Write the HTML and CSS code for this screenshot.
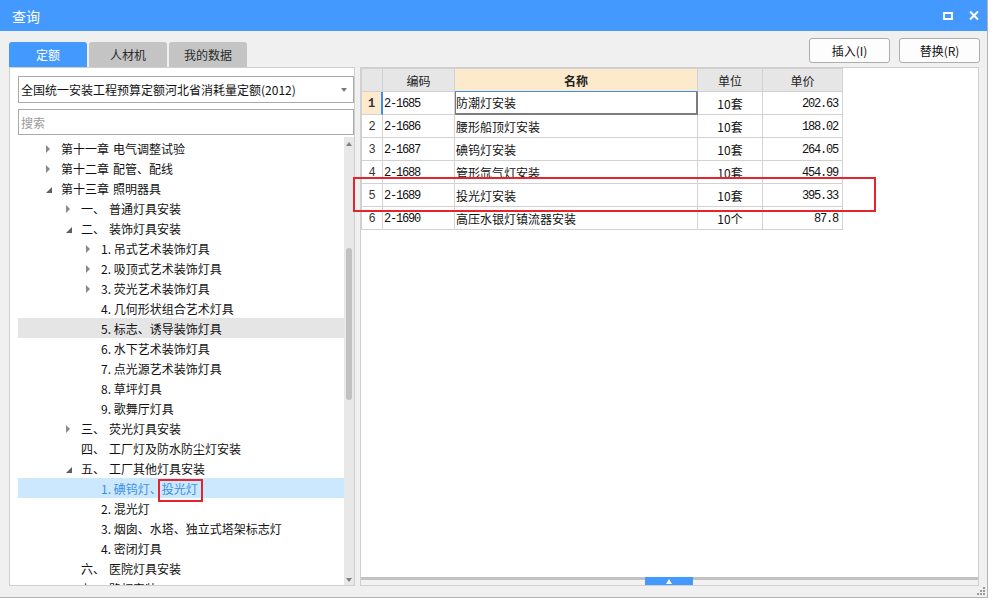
FILE: index.html
```html
<!DOCTYPE html>
<html lang="zh">
<head>
<meta charset="utf-8">
<title>查询</title>
<link rel="stylesheet" href="styles.css">
</head>
<body>
<div class="window">
  <div class="titlebar">
    <span class="title">查询</span>
    <div class="ctrls">
      <span class="maxbtn"></span>
      <svg class="closebtn" width="10" height="9" viewBox="0 0 10 9"><path d="M1 0.5 L9 8.5 M9 0.5 L1 8.5" stroke="#fff" stroke-width="2" fill="none"/></svg>
    </div>
  </div>
  <div class="main">
    <div class="leftcol">
      <div class="tabs">
        <div class="tab active">定额</div>
        <div class="tab">人材机</div>
        <div class="tab">我的数据</div>
      </div>
      <div class="panel lpanel">
        <div class="select"><span>全国统一安装工程预算定额河北省消耗量定额(2012)</span><span class="caret"></span></div>
        <div class="search">搜索</div>
        <div class="treewrap">
          <div class="tree">
            <div class="row l1"><span class="tw"><i class="ar"></i></span><span class="ch">第十一章</span>电气调整试验</div>
            <div class="row l1"><span class="tw"><i class="ar"></i></span><span class="ch">第十二章</span>配管、配线</div>
            <div class="row l1"><span class="tw"><i class="ad"></i></span><span class="ch">第十三章</span>照明器具</div>
            <div class="row l2"><span class="tw"><i class="ar"></i></span><span class="num">一、</span>普通灯具安装</div>
            <div class="row l2"><span class="tw"><i class="ad"></i></span><span class="num">二、</span>装饰灯具安装</div>
            <div class="row l3"><span class="tw"><i class="ar"></i></span>1. 吊式艺术装饰灯具</div>
            <div class="row l3"><span class="tw"><i class="ar"></i></span>2. 吸顶式艺术装饰灯具</div>
            <div class="row l3"><span class="tw"><i class="ar"></i></span>3. 荧光艺术装饰灯具</div>
            <div class="row l3"><span class="tw"></span>4. 几何形状组合艺术灯具</div>
            <div class="row l3 hover"><span class="tw"></span>5. 标志、诱导装饰灯具</div>
            <div class="row l3"><span class="tw"></span>6. 水下艺术装饰灯具</div>
            <div class="row l3"><span class="tw"></span>7. 点光源艺术装饰灯具</div>
            <div class="row l3"><span class="tw"></span>8. 草坪灯具</div>
            <div class="row l3"><span class="tw"></span>9. 歌舞厅灯具</div>
            <div class="row l2"><span class="tw"><i class="ar"></i></span><span class="num">三、</span>荧光灯具安装</div>
            <div class="row l2"><span class="tw"></span><span class="num">四、</span>工厂灯及防水防尘灯安装</div>
            <div class="row l2"><span class="tw"><i class="ad"></i></span><span class="num">五、</span>工厂其他灯具安装</div>
            <div class="row l3 selected"><span class="tw"></span>1. 碘钨灯、投光灯</div>
            <div class="row l3"><span class="tw"></span>2. 混光灯</div>
            <div class="row l3"><span class="tw"></span>3. 烟囱、水塔、独立式塔架标志灯</div>
            <div class="row l3"><span class="tw"></span>4. 密闭灯具</div>
            <div class="row l2"><span class="tw"></span><span class="num">六、</span>医院灯具安装</div>
            <div class="row l2"><span class="tw"></span><span class="num">七、</span>路灯安装</div>
          </div>
          <div class="vscroll">
            <i class="sup"></i>
            <div class="thumb"></div>
            <i class="sdown"></i>
          </div>
        </div>
      </div>
    </div>
    <div class="rightcol">
      <div class="btnrow">
        <button class="btn">插入(I)</button>
        <button class="btn">替换(R)</button>
      </div>
      <div class="panel rpanel">
        <div class="grid">
          <div class="c hd"></div>
          <div class="c hd">编码</div>
          <div class="c hd hdsel">名称</div>
          <div class="c hd">单位</div>
          <div class="c hd">单价</div>

          <div class="c rn rnsel">1</div>
          <div class="c code">2-1685</div>
          <div class="c name cellsel">防潮灯安装</div>
          <div class="c unit">10套</div>
          <div class="c price">202.63</div>

          <div class="c rn">2</div>
          <div class="c code">2-1686</div>
          <div class="c name">腰形船顶灯安装</div>
          <div class="c unit">10套</div>
          <div class="c price">188.02</div>

          <div class="c rn">3</div>
          <div class="c code">2-1687</div>
          <div class="c name">碘钨灯安装</div>
          <div class="c unit">10套</div>
          <div class="c price">264.05</div>

          <div class="c rn">4</div>
          <div class="c code">2-1688</div>
          <div class="c name">管形氙气灯安装</div>
          <div class="c unit">10套</div>
          <div class="c price">454.99</div>

          <div class="c rn">5</div>
          <div class="c code">2-1689</div>
          <div class="c name">投光灯安装</div>
          <div class="c unit">10套</div>
          <div class="c price">395.33</div>

          <div class="c rn">6</div>
          <div class="c code">2-1690</div>
          <div class="c name">高压水银灯镇流器安装</div>
          <div class="c unit">10个</div>
          <div class="c price">87.8</div>
        </div>
        <div class="splitter"><span class="handle"><i class="hup"></i></span></div>
      </div>
    </div>
  </div>
  <div class="mark mark-row"></div>
  <div class="mark mark-tree"></div>
  <svg class="grip" width="8" height="8" viewBox="0 0 8 8">
    <rect x="6" y="0" width="2" height="2" fill="#9a9a9a"/>
    <rect x="3" y="3" width="2" height="2" fill="#9a9a9a"/>
    <rect x="6" y="3" width="2" height="2" fill="#9a9a9a"/>
    <rect x="0" y="6" width="2" height="2" fill="#9a9a9a"/>
    <rect x="3" y="6" width="2" height="2" fill="#9a9a9a"/>
    <rect x="6" y="6" width="2" height="2" fill="#9a9a9a"/>
  </svg>
</div>
</body>
</html>
```

FILE: styles.css
```css
* { box-sizing: border-box; }
body {
  margin: 0;
  background: #ffffff;
  font-family: "Noto Sans CJK SC", "Microsoft YaHei", sans-serif;
  font-size: 12px;
  color: #111;
}
.window {
  position: relative;
  width: 988px;
  height: 598px;
  background: #f0f0f0;
  border-right: 1px solid #b4b4b4;
  border-bottom: 1px solid #b4b4b4;
}
.titlebar {
  height: 31px;
  background: #4499ff;
  display: flex;
  align-items: center;
  justify-content: space-between;
  padding: 0 8px 0 12px;
  color: #fff;
}
.title { font-size: 14px; line-height: 16px; }
.ctrls { display: flex; align-items: center; gap: 16px; }
.maxbtn {
  display: block;
  width: 10px;
  height: 8px;
  border: 2px solid #fff;
}
.closebtn { display: block; }

.main {
  display: flex;
  padding: 7px 0 0 9px;
  gap: 5px;
}
.leftcol { width: 346px; }
.tabs {
  display: flex;
  gap: 2px;
  margin-top: 4px;
  height: 25px;
}
.tab {
  width: 78px;
  height: 25px;
  background: #c4c4c4;
  color: #2a2a2a;
  border-radius: 3px 3px 0 0;
  display: flex;
  align-items: center;
  justify-content: center;
  line-height: 14px;
  padding-top: 1px;
}
.tab.active { background: #4499ff; color: #fff; }

.panel {
  background: #fff;
  border: 1px solid #cfcfcf;
  height: 519px;
}
.lpanel {
  padding: 8px 0 0 8px;
  display: flex;
  flex-direction: column;
}
.select {
  height: 27px;
  border: 1px solid #a9a9a9;
  display: flex;
  align-items: center;
  justify-content: space-between;
  padding: 1px 6px 0 2px;
  line-height: 14px;
  color: #111;
}
.caret {
  width: 0; height: 0;
  border-top: 4px solid #7a7a7a;
  border-left: 3px solid transparent;
  border-right: 3px solid transparent;
}
.search {
  margin-top: 6px;
  height: 26px;
  border: 1px solid #a9a9a9;
  color: #9a9a9a;
  padding: 1px 0 0 2px;
  display: flex;
  align-items: center;
  line-height: 14px;
}
.treewrap {
  flex: 1;
  display: flex;
  overflow: hidden;
  min-height: 0;
}
.tree {
  flex: 1;
  padding-top: 3px;
  overflow: hidden;
}
.row {
  height: 20px;
  display: flex;
  align-items: center;
  white-space: nowrap;
  line-height: 14px;
  padding-top: 1px;
  color: #111;
}
.row.l1 { padding-left: 28px; }
.row.l2 { padding-left: 48px; }
.row.l3 { padding-left: 68px; }
.row.hover { background: #e5e5e5; }
.row.selected { background: #cce8ff; color: #3d8fe5; }
.tw {
  width: 15px;
  flex: none;
  display: flex;
  align-items: center;
}
.ar {
  display: block;
  width: 0; height: 0;
  border-left: 4px solid #8a8a8a;
  border-top: 4px solid transparent;
  border-bottom: 4px solid transparent;
}
.ad {
  display: block;
  width: 0; height: 0;
  margin-top: 2px;
  border-bottom: 6px solid #5e5e5e;
  border-left: 6px solid transparent;
}
.ch { margin-right: 4px; }
.num { display: inline-block; width: 28px; }

.vscroll {
  width: 10px;
  flex: none;
  background: #e8e8e8;
  margin-top: 2px;
  position: relative;
}
.sup {
  position: absolute;
  left: 2px; top: 5px;
  width: 0; height: 0;
  border-bottom: 4px solid #808080;
  border-left: 3px solid transparent;
  border-right: 3px solid transparent;
}
.sdown {
  position: absolute;
  left: 2px; bottom: 3px;
  width: 0; height: 0;
  border-top: 4px solid #808080;
  border-left: 3px solid transparent;
  border-right: 3px solid transparent;
}
.thumb {
  position: absolute;
  left: 2px;
  top: 111px;
  width: 6px;
  height: 152px;
  background: #c1c1c1;
  border-radius: 3px;
}

.rightcol { width: 620px; }
.btnrow {
  height: 29px;
  display: flex;
  justify-content: flex-end;
  gap: 9px;
}
.btn {
  width: 81px;
  height: 25px;
  border: 1px solid #adadad;
  border-radius: 3px;
  background: #fdfdfd;
  font-family: "Noto Sans CJK SC", "Microsoft YaHei", sans-serif;
  font-size: 12px;
  line-height: 14px;
  color: #111;
  padding: 1px 0 0;
}
.rpanel {
  width: 619px;
  display: flex;
  flex-direction: column;
}
.grid {
  align-self: flex-start;
  display: grid;
  grid-template-columns: 21px 72px 243px 65px 80px;
  grid-auto-rows: 23px;
  border-top: 1px solid #d2d2d2;
  border-left: 1px solid #d2d2d2;
}
.c {
  border-right: 1px solid #d2d2d2;
  border-bottom: 1px solid #d2d2d2;
  display: flex;
  align-items: center;
  white-space: nowrap;
  line-height: 14px;
  padding-top: 1px;
  overflow: hidden;
}
.hd {
  background: #e6e6e6;
  justify-content: center;
  color: #222;
}
.hdsel {
  background: #fde9cc;
  font-weight: bold;
  border-bottom-color: #3d8fe8;
}
.rn { justify-content: center; color: #333; font-family: "Liberation Mono", monospace; }
.rnsel { background: #fde9cc; font-weight: bold; border-right: 2px solid #3d8fe8; }
.code {
  padding-left: 1px;
  font-family: "Liberation Mono", monospace;
  font-size: 12px;
  letter-spacing: -1.2px;
}
.name { padding-left: 1px; }
.cellsel {
  border-right: 2px solid #7d7d7d;
  border-bottom: 2px solid #7d7d7d;
  box-shadow: inset 1px 0 0 #7d7d7d;
}
.unit { justify-content: center; }
.price {
  justify-content: flex-end;
  padding-right: 4px;
  font-family: "Liberation Mono", monospace;
  font-size: 12px;
  letter-spacing: -1.2px;
}
.splitter {
  margin-top: auto;
  height: 8px;
  border-top: 3px solid #c2c2c2;
  background: #f2f2f2;
  position: relative;
}
.handle {
  position: absolute;
  top: -3px;
  left: 284px;
  width: 48px;
  height: 8px;
  background: #4499ff;
}
.hup {
  position: absolute;
  left: 21px;
  top: 2px;
  width: 0; height: 0;
  border-bottom: 5px solid #fff;
  border-left: 3px solid transparent;
  border-right: 3px solid transparent;
}

.mark {
  position: absolute;
  border: 2px solid #e3262b;
}
.mark-row { left: 353px; top: 177px; width: 523px; height: 35px; }
.mark-tree { left: 158px; top: 479px; width: 45px; height: 23px; }
.grip { position: absolute; right: 2px; bottom: 2px; }
```
